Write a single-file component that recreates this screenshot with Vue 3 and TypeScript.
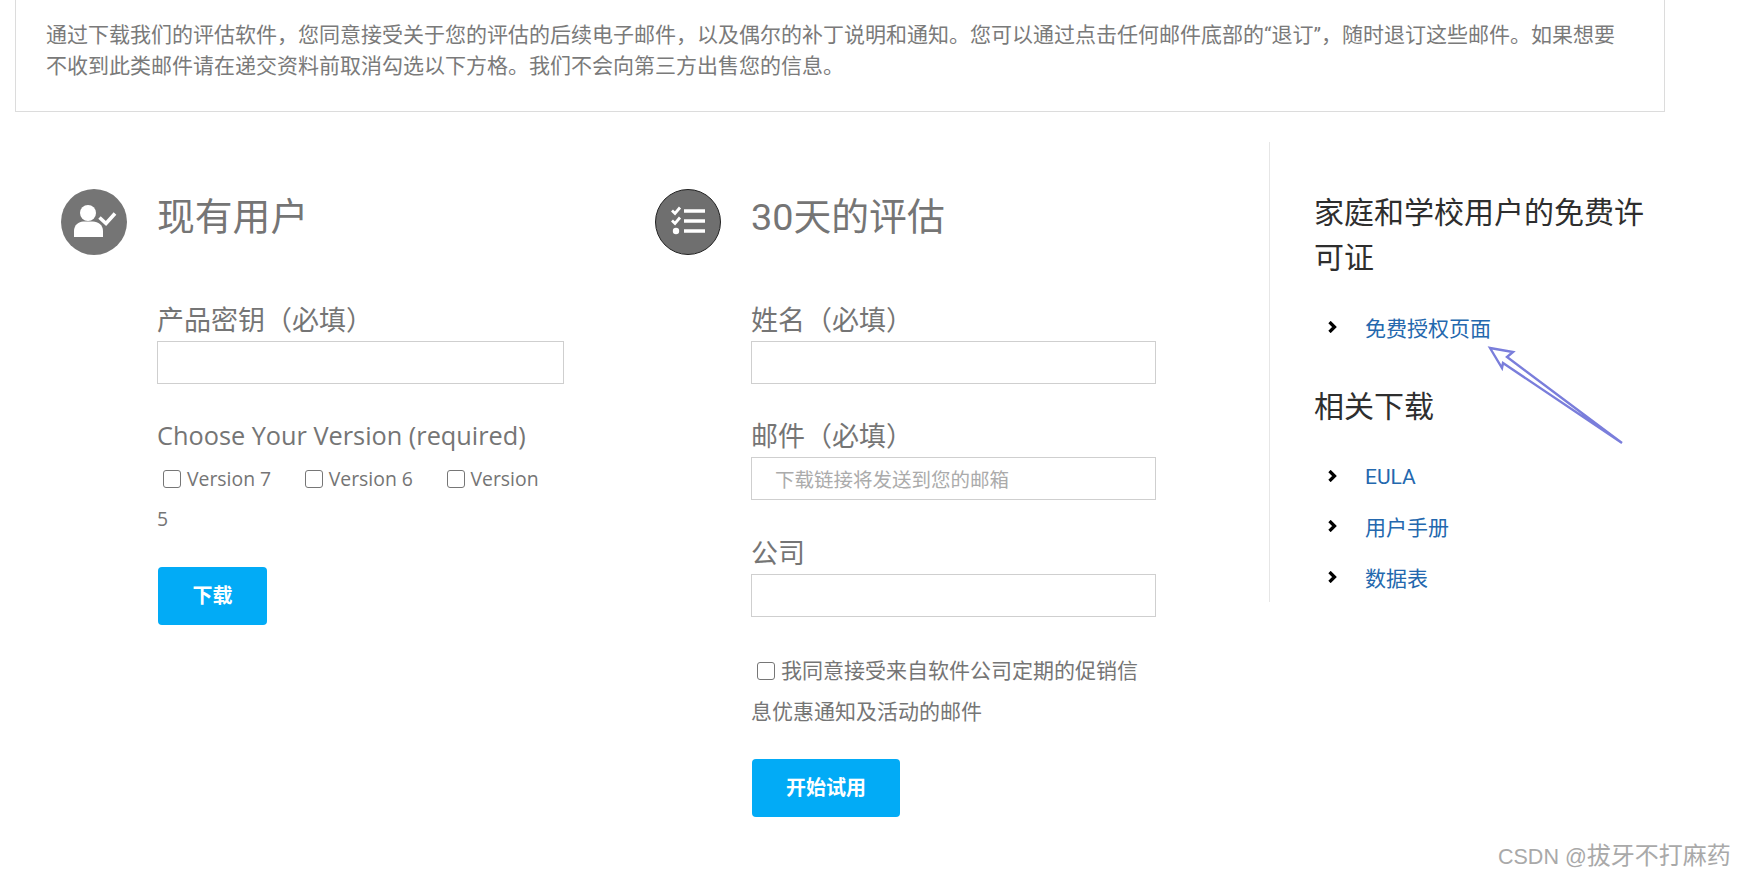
<script setup lang="ts">
const versions = ['Version 7', 'Version 6', 'Version 5']
const related = ['EULA', '用户手册', '数据表']
</script>

<template>
  <div class="page">
    <div class="notice">
      通过下载我们的评估软件，您同意接受关于您的评估的后续电子邮件，以及偶尔的补丁说明和通知。您可以通过点击任何邮件底部的“退订”，随时退订这些邮件。如果想要不收到此类邮件请在递交资料前取消勾选以下方格。我们不会向第三方出售您的信息。
    </div>

    <div class="main">
      <section class="col col-one">
        <div class="col-head">
          <svg class="badge" viewBox="0 0 66 66" width="66" height="66">
            <circle cx="33" cy="33" r="33" fill="#757575" />
            <circle cx="27" cy="24" r="8" fill="#fff" />
            <path d="M13 48v-6c0-6 5-9.500 9-9.500h10c5 0 10 3.500 10 9.500v6z" fill="#fff" />
            <path d="M38.500 28.500l6.500 6 9-10" fill="none" stroke="#fff" stroke-width="3.600" />
          </svg>
          <h2>现有用户</h2>
        </div>
        <form class="fields fields-one" @submit.prevent>
          <label class="field-label">产品密钥（必填）</label>
          <input class="text-input" type="text" />
          <div class="field-label latin gap-label">Choose Your Version (required)</div>
          <div class="versions">
            <template v-for="v in versions" :key="v">
              <label class="version"><input class="check" type="checkbox" />{{ v }}</label>{{ ' ' }}
            </template>
          </div>
          <button class="cta cta-download" type="button">下载</button>
        </form>
      </section>

      <section class="col col-two">
        <div class="col-head">
          <svg class="badge" viewBox="0 0 66 66" width="66" height="66">
            <circle cx="33" cy="33" r="32.500" fill="#6f6f6f" stroke="#222" stroke-width="1" />
            <path d="M29 22h21M29 32h21M29 42h21" stroke="#fff" stroke-width="3.600" fill="none" />
            <path d="M17 21.500l3 3 5-6M17 31.500l3 3 5-6" stroke="#fff" stroke-width="2.800" fill="none" />
            <circle cx="21" cy="42" r="3.200" fill="#fff" />
          </svg>
          <h2>30天的评估</h2>
        </div>
        <form class="fields fields-two" @submit.prevent>
          <label class="field-label">姓名（必填）</label>
          <input class="text-input" type="text" />
          <label class="field-label gap-label">邮件（必填）</label>
          <input class="text-input" type="text" placeholder="下载链接将发送到您的邮箱" />
          <label class="field-label gap-wide">公司</label>
          <input class="text-input" type="text" />
          <label class="consent"><input class="check" type="checkbox" />我同意接受来自软件公司定期的促销信息优惠通知及活动的邮件</label>
          <button class="cta cta-trial" type="button">开始试用</button>
        </form>
      </section>

      <aside class="side">
        <h3 class="side-title">家庭和学校用户的免费许可证</h3>
        <ul class="links first-links">
          <li>
            <svg class="chev" viewBox="0 0 9 12" width="9" height="12"><path d="M1.500 1l5 5-5 5" fill="none" stroke="#000" stroke-width="3.300" /></svg>
            <a href="#">免费授权页面</a>
          </li>
        </ul>
        <h3 class="side-title related">相关下载</h3>
        <ul class="links">
          <li v-for="r in related" :key="r">
            <svg class="chev" viewBox="0 0 9 12" width="9" height="12"><path d="M1.500 1l5 5-5 5" fill="none" stroke="#000" stroke-width="3.300" /></svg>
            <a href="#" :class="{ 'latin-link': r === 'EULA' }">{{ r }}</a>
          </li>
        </ul>
      </aside>
    </div>

    <svg class="annotation" viewBox="0 0 140 105" width="140" height="105">
      <path d="M4 4L27 8L21 13L136 99L17 19L16 24Z" fill="#fff" stroke="#7a7edb" stroke-width="2.400" stroke-linejoin="miter" />
    </svg>
    <div class="watermark"><span class="wm-latin">CSDN @</span>拔牙不打麻药</div>
  </div>
</template>

<style>
html, body { margin: 0; background: #fff; }
</style>

<style scoped>
.page {
  position: relative;
  width: 1745px;
  height: 877px;
  overflow: hidden;
  background: #fff;
  color: #757575;
  font-family: Roboto, "Noto Sans CJK SC", sans-serif;
}
.notice {
  box-sizing: border-box;
  width: 1650px;
  height: 112px;
  margin-left: 15px;
  padding: 20px 30px 0;
  border: 1px solid #dcdcdc;
  border-top: 0;
  font-size: 21px;
  line-height: 31px;
  color: #7a7a7a;
}
.main {
  display: flex;
  margin-top: 30px;
  padding-left: 61px;
}
.col { padding-top: 47px; box-sizing: border-box; }
.col-one { width: 594px; }
.col-two { width: 614px; }
.col-head {
  display: flex;
  align-items: flex-start;
  gap: 30px;
  height: 66px;
}
.badge { flex: none; display: block; }
.col-head h2 {
  margin: 0;
  font-size: 37.800px;
  font-weight: 400;
  line-height: 57px;
}
.fields { padding-left: 96px; }
.fields-one { width: 407px; }
.fields-two { width: 405px; }
.field-label {
  display: block;
  font-size: 27px;
  line-height: 40px;
  margin-top: 46px;
  height: 40px;
}
.gap-label { margin-top: 33px; }
.gap-wide { margin-top: 34px; }
.latin {
  font-family: "Open Sans", "Noto Sans CJK SC", sans-serif;
  font-size: 25.300px;
  line-height: 36px;
}
.text-input {
  display: block;
  box-sizing: border-box;
  width: 100%;
  height: 43px;
  padding: 3px 23px 0;
  border: 1px solid #cfcfcf;
  background: #fff;
  font: 19.500px Roboto, "Noto Sans CJK SC", sans-serif;
  color: #757575;
  outline: none;
}
.text-input::placeholder { color: #ababab; opacity: 1; }
.versions {
  font-family: "Open Sans", "Noto Sans CJK SC", sans-serif;
  font-size: 19.400px;
  line-height: 40px;
  margin-top: 2px;
}
.version { margin-right: 22.500px; }
.check {
  appearance: none;
  box-sizing: border-box;
  display: inline-block;
  width: 18px;
  height: 18px;
  margin: 0 6px;
  border: 1.500px solid #767676;
  border-radius: 3px;
  background: #fff;
  vertical-align: -2px;
}
.cta {
  display: block;
  border: 0;
  border-radius: 4px;
  background: #02abf6;
  color: #fff;
  font: 700 20px Roboto, "Noto Sans CJK SC", sans-serif;
  height: 58px;
  padding: 0 0 3px;
}
.cta-download { width: 109px; margin: 28px 0 0 1px; }
.cta-trial { width: 148px; margin: 26px 0 0 1px; }
.consent {
  display: block;
  font-size: 21px;
  line-height: 41px;
  margin-top: 34px;
}
.side {
  box-sizing: border-box;
  width: 400px;
  height: 460px;
  border-left: 1px solid #e6e6e6;
  padding: 49px 0 0 44px;
  color: #2e2e2e;
}
.side-title {
  margin: 0;
  width: 340px;
  font-size: 30px;
  font-weight: 400;
  line-height: 44.500px;
}
.related { margin-top: 32px; }
.links {
  list-style: none;
  margin: 21.500px 0 0;
  padding: 0;
}
.first-links { margin-top: 22px; }
.links li {
  display: flex;
  align-items: center;
  height: 50.500px;
  font-size: 21px;
}
.chev { margin-left: 14px; margin-right: 28px; flex: none; }
.links a { color: #2468ae; text-decoration: none; }
.links a.latin-link { padding-top: 3px; }
.annotation {
  position: absolute;
  left: 1486px;
  top: 344px;
}
.watermark {
  position: absolute;
  left: 1498px;
  top: 840px;
  font-family: "Liberation Sans", "Noto Sans CJK SC", sans-serif;
  font-size: 24px;
  line-height: 32px;
  color: #a9a9a9;
  white-space: nowrap;
}
.wm-latin { font-size: 21.500px; }
</style>
